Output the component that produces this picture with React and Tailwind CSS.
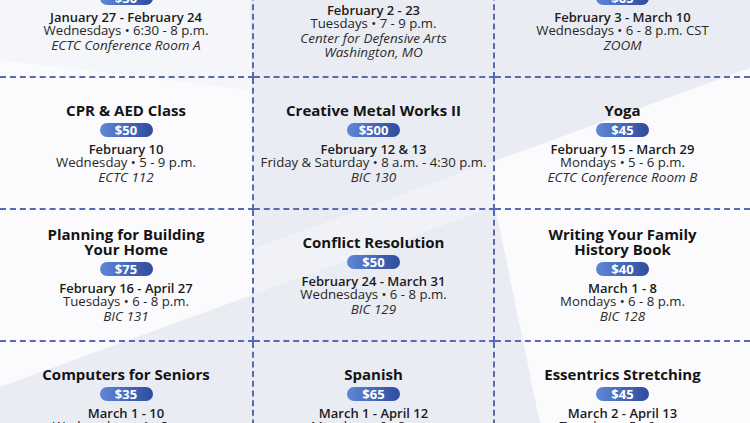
import React from 'react';

const classes = [
  { title: 'Floral Design', price: '$30', date: 'January 27 - February 24', time: 'Wednesdays • 6:30 - 8 p.m.', place: ['ECTC Conference Room A'] },
  { title: 'Self Defense', price: '$60', date: 'February 2 - 23', time: 'Tuesdays • 7 - 9 p.m.', place: ['Center for Defensive Arts', 'Washington, MO'] },
  { title: 'Excel Basics', price: '$65', date: 'February 3 - March 10', time: 'Wednesdays • 6 - 8 p.m. CST', place: ['ZOOM'] },
  { title: 'CPR & AED Class', price: '$50', date: 'February 10', time: 'Wednesday • 5 - 9 p.m.', place: ['ECTC 112'] },
  { title: 'Creative Metal Works II', price: '$500', date: 'February 12 & 13', time: 'Friday & Saturday • 8 a.m. - 4:30 p.m.', place: ['BIC 130'] },
  { title: 'Yoga', price: '$45', date: 'February 15 - March 29', time: 'Mondays • 5 - 6 p.m.', place: ['ECTC Conference Room B'] },
  { title: ['Planning for Building', 'Your Home'], price: '$75', date: 'February 16 - April 27', time: 'Tuesdays • 6 - 8 p.m.', place: ['BIC 131'] },
  { title: 'Conflict Resolution', price: '$50', date: 'February 24 - March 31', time: 'Wednesdays • 6 - 8 p.m.', place: ['BIC 129'] },
  { title: ['Writing Your Family', 'History Book'], price: '$40', date: 'March 1 - 8', time: 'Mondays • 6 - 8 p.m.', place: ['BIC 128'] },
  { title: 'Computers for Seniors', price: '$35', date: 'March 1 - 10', time: 'Wednesdays • 1 - 3 p.m.', place: ['ECTC 112'] },
  { title: 'Spanish', price: '$65', date: 'March 1 - April 12', time: 'Mondays • 6 - 8 p.m.', place: ['BIC 129'] },
  { title: 'Essentrics Stretching', price: '$45', date: 'March 2 - April 13', time: 'Tuesdays • 5 - 6 p.m.', place: ['ECTC 112'] },
];

// column borders: first two columns get a right edge
const colBorder = ['border-r-2', 'border-r-2', ''];

const ClassCell = ({ item, col }) => {
  const titleLines = Array.isArray(item.title) ? item.title : [item.title];
  return (
    <div className={`flex flex-col items-center justify-center text-center h-[132px] border-b-2 border-dashed border-[#5a69b1] ${colBorder[col]}`}>
      {titleLines.map((t) => (
        <h3 key={t} className="font-bold text-[15px] leading-[15px] text-[#141414]">{t}</h3>
      ))}
      <span className="mt-[5px] w-[53px] h-[14px] rounded-full bg-linear-to-r from-[#6187d6] to-[#2f4c9f] text-white font-bold text-[13px] leading-[14px]">
        {item.price}
      </span>
      <p className="mt-[6px] font-semibold text-[13px] leading-[13px] text-[#1b1b1b]">{item.date}</p>
      <p className="text-[13.2px] leading-[13px] text-[#262626]">{item.time}</p>
      <div className="mt-[1px]">
        {item.place.map((p) => (
          <p key={p} className="italic text-[13.5px] leading-[14px] text-[#2c2c2c]">{p}</p>
        ))}
      </div>
    </div>
  );
};

export default function App() {
  return (
    <div className="w-[750px] h-[423px] overflow-hidden bg-white grid" style={{ fontFamily: '"Open Sans", "Liberation Sans", sans-serif' }}>
      {/* background shapes */}
      <svg className="col-start-1 row-start-1" width="750" height="423" viewBox="0 0 750 423">
        <rect width="750" height="423" fill="#fbfbfd" />
        <polygon points="0,0 250,0 250,90 0,60" fill="#f5f6f9" />
        <polygon points="250,0 750,0 750,68 254,249" fill="#eaecf3" />
        <polygon points="254,249 495,160 495,206 254,294" fill="#f1f2f7" />
        <polygon points="0,387 495,206 540,423 0,423" fill="#eaecf3" />
      </svg>
      <div className="col-start-1 row-start-1 grid grid-cols-[254px_241px_255px] mt-[-54px] self-start">
        {classes.map((item, i) => (
          <ClassCell key={i} item={item} col={i % 3} />
        ))}
      </div>
    </div>
  );
}
